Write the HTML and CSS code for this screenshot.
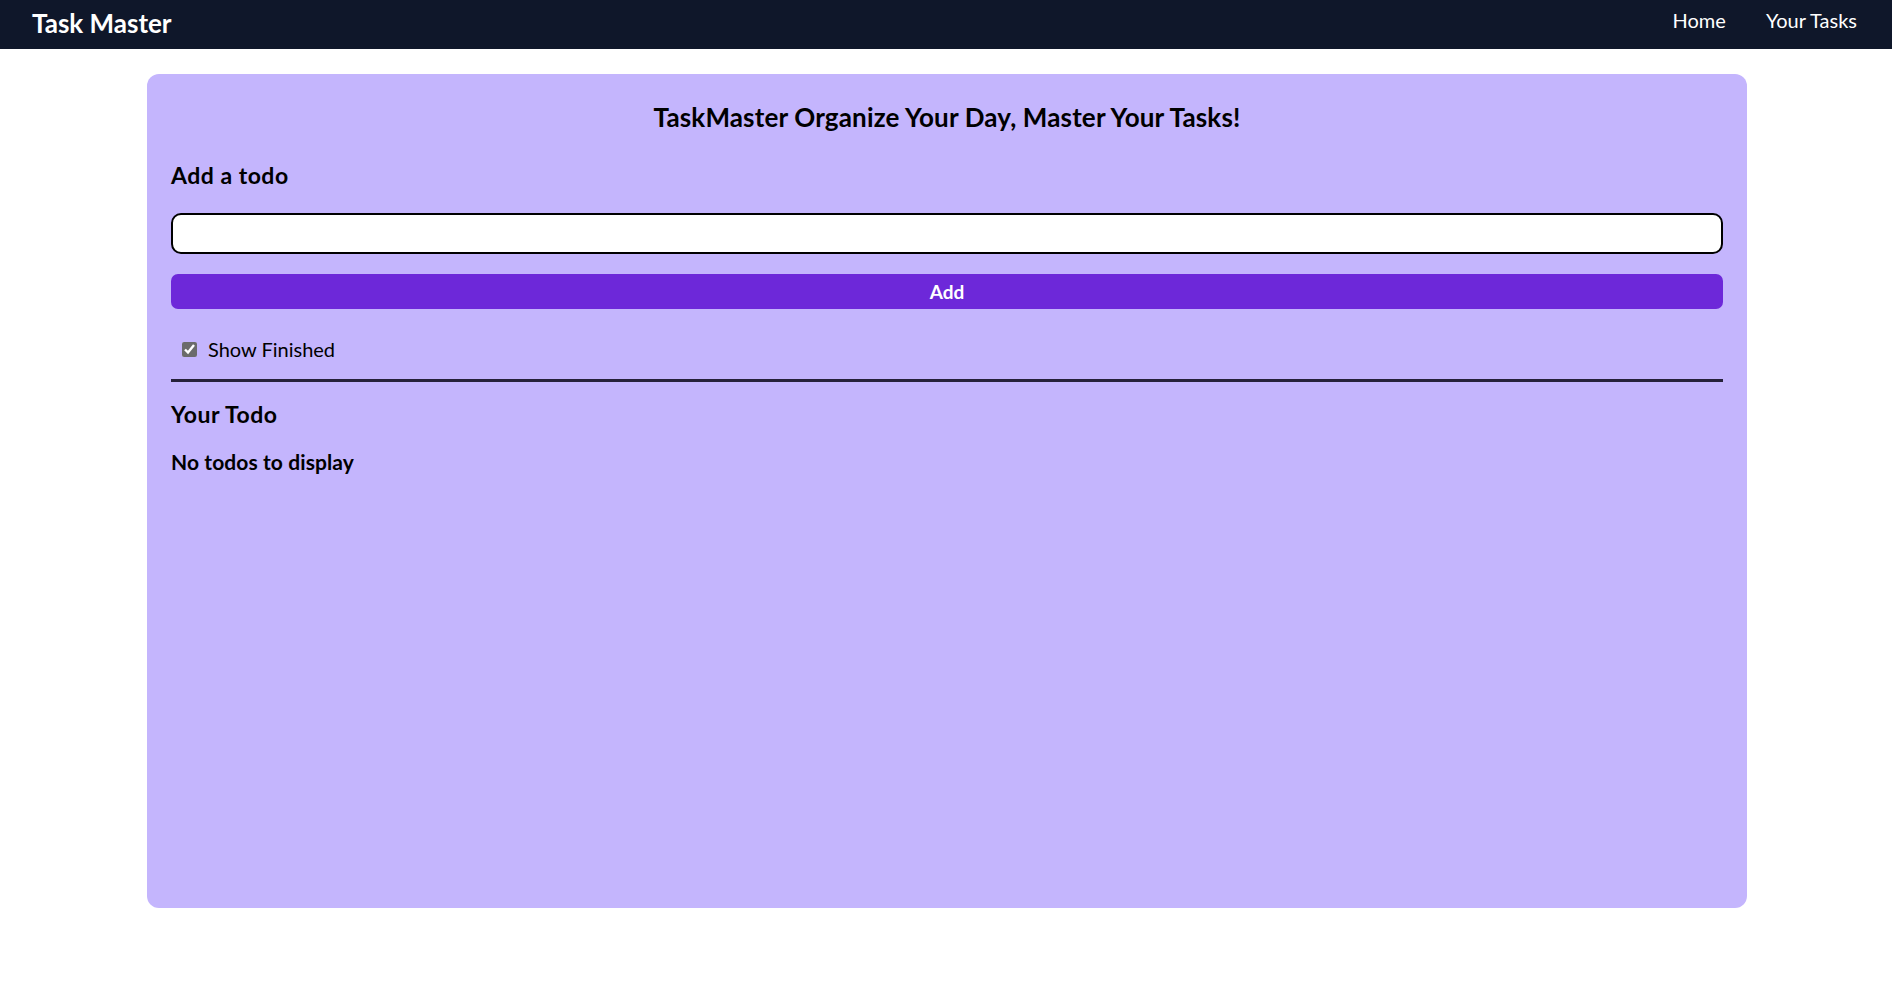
FILE: index.html
```html
<!DOCTYPE html>
<html lang="en">
<head>
<meta charset="utf-8">
<title>Task Master</title>
<link rel="stylesheet" href="styles.css">
</head>
<body>
<nav class="navbar">
  <div class="logo">Task Master</div>
  <ul class="nav-links">
    <li>Home</li>
    <li>Your Tasks</li>
  </ul>
</nav>
<main class="card">
  <h1 class="title">TaskMaster Organize Your Day, Master Your Tasks!</h1>
  <h2 class="section-title">Add a todo</h2>
  <input class="todo-input" type="text">
  <button class="add-btn">Add</button>
  <label class="show-finished"><input class="check" type="checkbox" checked> Show Finished</label>
  <div class="divider"></div>
  <h2 class="section-title todo-title">Your Todo</h2>
  <div class="empty">No todos to display</div>
</main>
</body>
</html>
```
FILE: styles.css
```css
* { box-sizing: border-box; }
html, body { margin: 0; padding: 0; }
body {
  font-family: Lato, "Open Sans", sans-serif;
  background: #ffffff;
  color: #000;
}
.navbar {
  height: 49px;
  background: #0f172a;
  display: flex;
  justify-content: space-between;
  align-items: flex-start;
  padding: 5px 35px 0 32px;
  color: #fff;
}
.logo {
  font-size: 26px;
  font-weight: 700;
  line-height: 36px;
}
.nav-links {
  list-style: none;
  margin: 1px 0 0;
  padding: 0;
  display: flex;
  gap: 40px;
  font-size: 20px;
  line-height: 28px;
}
.card {
  width: 1600px;
  height: 834px;
  margin: 25px 145px 0 147px;
  background: #c4b5fd;
  border-radius: 12px;
  padding: 26px 24px 24px;
  display: flex;
  flex-direction: column;
}
.title {
  margin: 0;
  text-align: center;
  font-size: 26px;
  letter-spacing: 0.15px;
  line-height: 34px;
  font-weight: 700;
}
.section-title {
  margin: 26px 0 0;
  font-size: 23px;
  letter-spacing: 0.5px;
  line-height: 30px;
  font-weight: 700;
}
.todo-input {
  margin-top: 23px;
  height: 41px;
  width: 100%;
  border: 2px solid #000;
  border-radius: 10px;
  background: #fff;
  font: inherit;
  padding: 0 12px;
}
.add-btn {
  margin-top: 20px;
  height: 35px;
  width: 100%;
  border: none;
  border-radius: 7px;
  background: #6d28d9;
  color: #fff;
  font-family: inherit;
  font-size: 19px;
  font-weight: 700;
  padding: 0;
}
.show-finished {
  margin-top: 26px;
  display: flex;
  align-items: center;
  gap: 11px;
  padding-left: 11px;
  font-size: 20px;
  line-height: 28px;
}
.check {
  margin: 0;
  width: 15px;
  height: 15px;
  accent-color: #6b6b6b;
}
.divider {
  margin-top: 16px;
  height: 3px;
  background: #26213a;
}
.todo-title {
  margin-top: 17px;
}
.empty {
  margin-top: 19px;
  font-size: 21px;
  letter-spacing: 0.1px;
  line-height: 28px;
  font-weight: 700;
}
```
